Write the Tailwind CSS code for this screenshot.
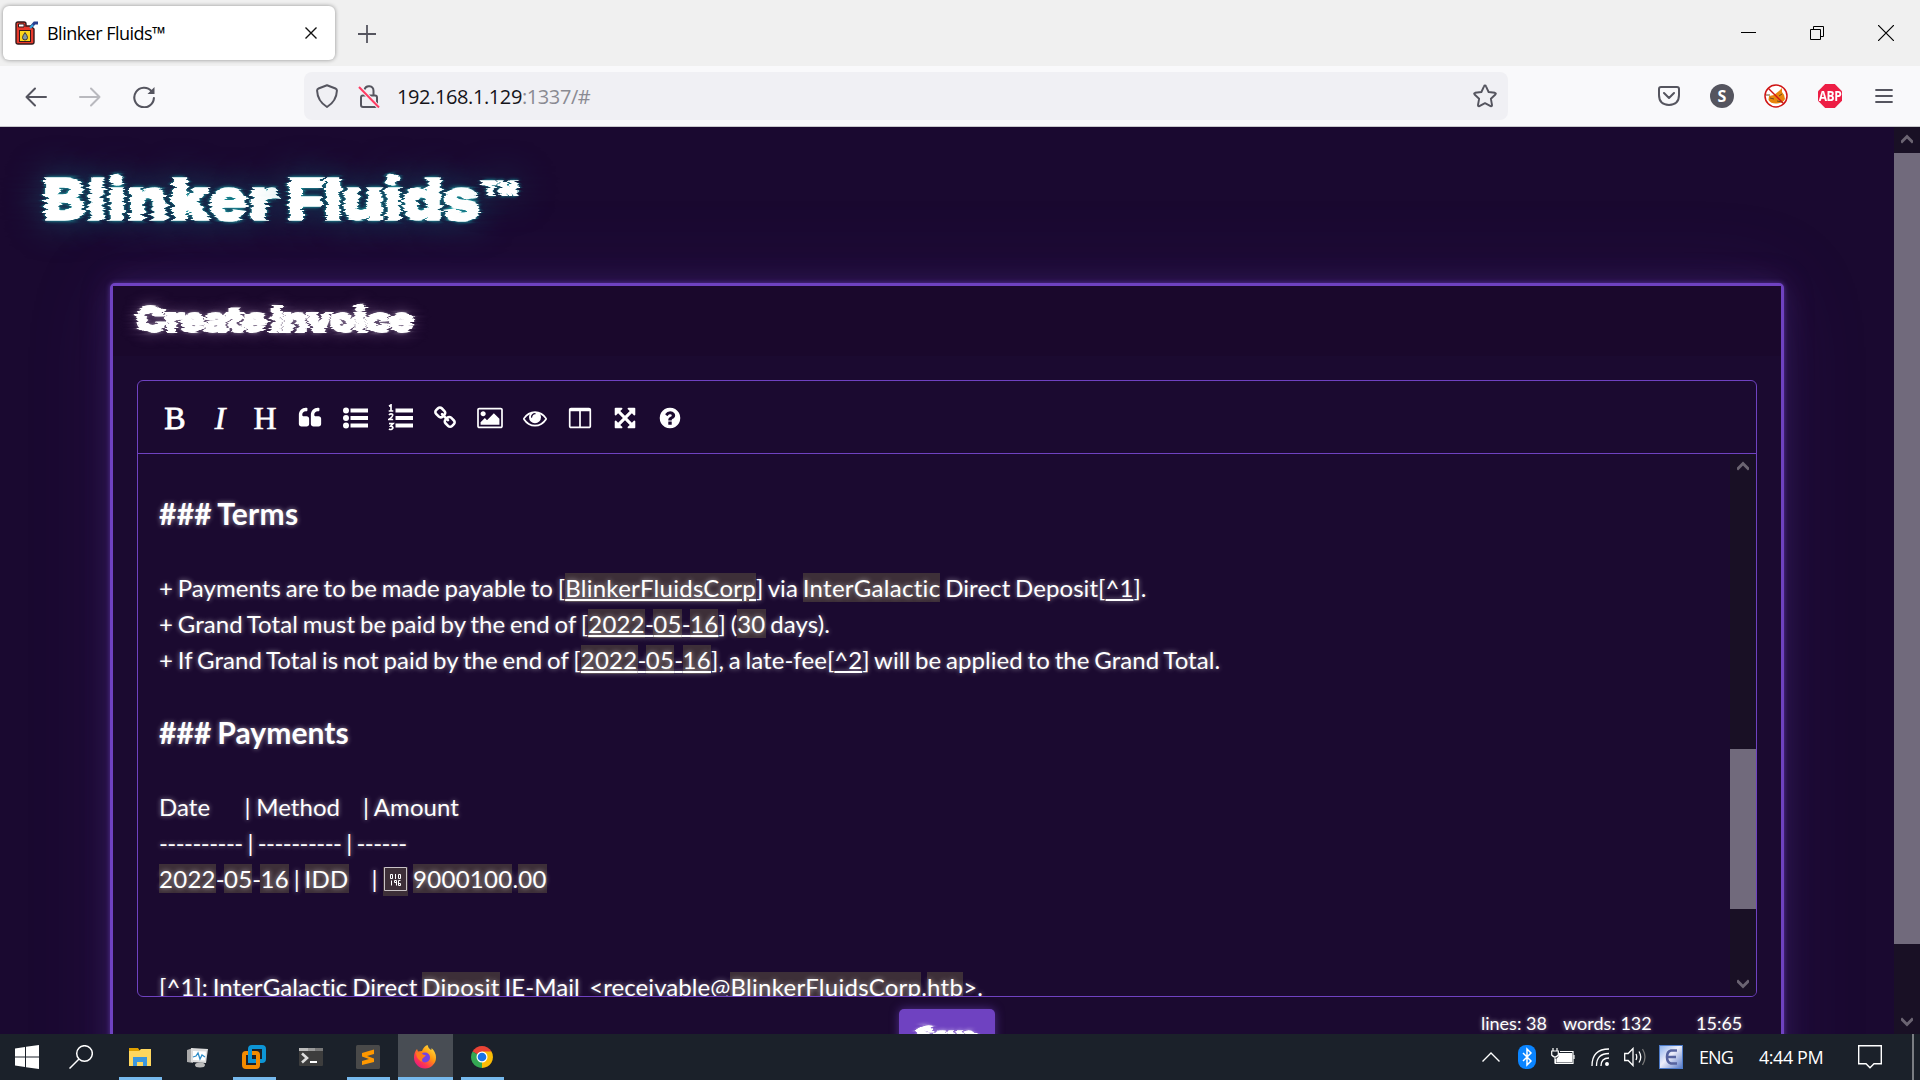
<!DOCTYPE html>
<html lang="en">
<head>
<meta charset="utf-8">
<title>Blinker Fluids™</title>
<script src="https://cdn.jsdelivr.net/npm/@tailwindcss/browser@4"></script>
</head>
<body class="w-[1920px] h-[1080px] overflow-hidden flex flex-col bg-[#1a0930] font-['Open_Sans',sans-serif]">
<svg class="absolute w-0 h-0"><defs>
<filter id="glitch" x="-5%" y="-20%" width="110%" height="140%" color-interpolation-filters="sRGB"><feTurbulence type="fractalNoise" baseFrequency="0.03 0.36" numOctaves="2" seed="7"/><feColorMatrix values="1 0 0 0 0  0 0 0 0 0.5  0 0 0 0 0.5  0 0 0 0 1" result="n"/><feDisplacementMap in="SourceGraphic" in2="n" scale="12" xChannelSelector="R" yChannelSelector="G"/></filter>
</defs></svg>

<!-- tab strip -->
<header class="h-[66px] shrink-0 bg-[#f0f0f0] flex items-center justify-between pl-[3px]">
  <div class="flex items-center">
    <div class="w-[332px] h-[54px] rounded-md bg-white shadow-[0_0_4px_rgba(0,0,0,0.4)] flex items-center pl-3 pr-[18px]">
      <svg class="w-6 h-6" viewBox="0 0 24 24"><path d="M1 3q0-2 2-2h6q2 0 2 2v2h5l3 3v13q0 2-2 2H3q-2 0-2-2z" fill="#e8392b" stroke="#33191b" stroke-width="1.4"/><path d="M3.500 3h5.500v3H3.500z" fill="#fff" stroke="#33191b"/><path d="M16.500 5.500l3-3.500H23" fill="none" stroke="#2b3f8f" stroke-width="3"/><path d="M15 7l3-3" stroke="#37a7dc" stroke-width="2"/><rect x="4.500" y="9.500" width="11" height="11" fill="#fbd51b" stroke="#33191b"/><path d="M10 11.500q2.500 3.500 2.500 5a2.500 2.500 0 0 1-5 0q0-1.500 2.500-5z" fill="#7d98a8" stroke="#23191f" stroke-width=".8"/></svg>
      <span class="ml-2 text-[18px] tracking-[-0.52px] text-black">Blinker Fluids™</span>
      <svg class="ml-auto w-3 h-3" viewBox="0 0 12 12" stroke="#111" stroke-width="1.400"><path d="M.5.5l11 11M11.500.5l-11 11"/></svg>
    </div>
    <svg class="ml-[23px] mt-px w-[18px] h-[18px]" viewBox="0 0 18 18" stroke="#55555f" stroke-width="1.800"><path d="M9 0v18M0 9h18"/></svg>
  </div>
  <div class="flex items-center pr-[26px] gap-[54px] text-black">
    <svg class="w-[15px] h-4" viewBox="0 0 15 16"><path d="M0 7.500h15" stroke="#000"/></svg>
    <svg class="w-[14px] h-[14px]" viewBox="0 0 14 14" fill="none" stroke="#000"><path d="M.5 3.500h10v10H.5zM3.500 3.500v-3h10v10h-3"/></svg>
    <svg class="w-4 h-4" viewBox="0 0 16 16" stroke="#000" stroke-width="1.200"><path d="M0 0l16 16M16 0L0 16"/></svg>
  </div>
</header>

<!-- navigation bar -->
<nav class="h-[61px] shrink-0 bg-[#f9f9fb] border-b border-[#c8c8cc] flex items-center pl-[25px] pr-[27px]">
  <svg class="mt-[2px] w-[22px] h-[20px]" viewBox="0 0 22 20" fill="none" stroke="#55555f" stroke-width="2" stroke-linecap="round" stroke-linejoin="round"><path d="M21 10H1.500M10 1.500L1.500 10l8.500 8.500"/></svg>
  <svg class="mt-[2px] ml-8 w-[22px] h-[20px]" viewBox="0 0 22 20" fill="none" stroke="#b9b9be" stroke-width="2" stroke-linecap="round" stroke-linejoin="round"><path d="M1 10h19.500M12 1.500l8.500 8.500-8.500 8.500"/></svg>
  <svg class="mt-[2px] ml-8 w-[22px] h-[22px]" viewBox="0 0 22 22" fill="none" stroke="#55555f" stroke-width="2.100" stroke-linecap="round"><path d="M18.600 5.200A9.800 9.800 0 1 0 20.900 12"/><path d="M21.500 1v7h-7z" fill="#55555f" stroke="none"/></svg>
  <div class="ml-[149px] w-[1204px] h-12 rounded-lg bg-[#f0f0f4] flex items-center pl-3 pr-[11px]">
    <svg class="w-[22px] h-6" viewBox="0 0 22 24" fill="none" stroke="#55555f" stroke-width="2" stroke-linejoin="round"><path d="M11 1.200l8.500 3.300q1.500.6 1.400 2.200Q20.500 17 11 23 1.500 17 1.100 6.700 1 5.100 2.500 4.500z"/></svg>
    <svg class="ml-[20px] w-[22px] h-6" viewBox="0 0 22 24" fill="none" stroke="#55555f" stroke-width="2"><rect x="3" y="11.500" width="16" height="11.500" rx="2"/><path d="M6.500 5.500a4.600 4.600 0 0 1 9 1.200V11"/><path d="M1 3l20 20.500" stroke="#f0f0f4" stroke-width="4"/><path d="M1 3l20 20.500" stroke="#ff3b62"/></svg>
    <span class="ml-[17px] mt-[2px] text-[20px] tracking-[-0.4px] text-[#8a8a92] whitespace-nowrap"><span class="text-[#15141a]">192.168.1.129</span>:1337/#</span>
    <svg class="ml-auto w-6 h-6" viewBox="0 0 24 24" fill="none" stroke="#55555f" stroke-width="1.900" stroke-linejoin="round"><path d="M12 1.500q.7 0 1 .8l2.600 5.700 6.300.8q1.600.4.500 1.700l-4.500 4.300 1.100 6.200q.1 1.700-1.400 1.200L12 19.200l-5.600 3q-1.500.5-1.400-1.200l1.100-6.200-4.500-4.300Q.5 9.200 2.100 8.800L8.400 8 11 2.300q.3-.8 1-.8z"/></svg>
  </div>
  <div class="ml-auto flex items-center gap-[30px]">
    <svg class="w-[22px] h-5" viewBox="0 0 22 20" fill="none" stroke="#55555f" stroke-width="2" stroke-linecap="round" stroke-linejoin="round"><path d="M3 1h16q2 0 2 2v6q0 9.500-10 10Q1 18.500 1 9V3q0-2 2-2zM6 7l5 5 5-5"/></svg>
    <span class="w-6 h-6 rounded-full bg-[#55555f] text-white text-[16px] font-bold leading-6 text-center">S</span>
    <svg class="w-6 h-6" viewBox="0 0 24 24"><circle cx="12" cy="12" r="11" fill="#fff"/><path d="M5 12l5-1 5-4 3-3v4q3 3 3 7-2 4-8 4.500Q7 20 4.500 16z" fill="#e8850c"/><path d="M6 14l4 1M15 12l3-2M13 17l5 1M2 11h4" stroke="#6b4a20"/><circle cx="12" cy="12" r="11" fill="none" stroke="#cf1414" stroke-width="1.500"/><path d="M4 4l16 16" stroke="#cf1414" stroke-width="1.500"/></svg>
    <span class="w-6 h-6 flex items-center justify-center bg-[#ed1e45] text-white text-[12px] font-bold tracking-[-0.5px] [clip-path:polygon(30%_0,70%_0,100%_30%,100%_70%,70%_100%,30%_100%,0_70%,0_30%)]"><span class="scale-y-[1.2]">ABP</span></span>
    <svg class="ml-[3px] w-[18px] h-4" viewBox="0 0 18 16" stroke="#55555f" stroke-width="1.800" stroke-linecap="round"><path d="M1 2h16M1 8h16M1 14h16"/></svg>
  </div>
</nav>

<!-- page -->
<div class="flex-1 min-h-0 flex overflow-hidden">
  <main class="w-[1894px] h-full overflow-hidden flex flex-col">
    <h1 class="h-[156px] shrink-0 pl-[43px] pt-[34px] font-['Inter',sans-serif] font-black text-[58px] leading-[76px] text-white whitespace-nowrap [text-shadow:0_0_3px_#1fd0d0,0_0_5px_#1fa8a8,0_0_36px_#1b8f9c90]"><span class="inline-block origin-left scale-x-[1.09] [word-spacing:-4px] [-webkit-text-stroke:1.5px_white] [filter:url(#glitch)]"><span class="tracking-[1.6px]">Blinker</span> Fluids<span class="text-[54px] leading-none">™</span></span></h1>
    <section class="ml-[110px] w-[1674px] h-[900px] shrink-0 border-[3px] border-[#6f42c1] rounded-[5px] bg-[#1b0a30] shadow-[0_0_5px_#6f42c1aa,0_0_30px_#6f42c140,0_0_90px_#6f42c120] flex flex-col">
      <h2 class="h-[70px] shrink-0 pl-[23px] pt-[9px] bg-[#1a082c] font-['Inter',sans-serif] font-black text-[35px] leading-[48px] tracking-[-0.6px] text-white whitespace-nowrap [text-shadow:0_0_4px_#ffffffaa,0_0_14px_#cba6d888]"><span class="inline-block origin-left scale-x-[1.14] [word-spacing:-2px] [-webkit-text-stroke:2px_white] [filter:url(#glitch)]">Create Invoice</span></h2>
      <div class="mt-[24px] ml-6 w-[1620px] h-[617px] shrink-0 border border-[#6f42c1] rounded-md flex flex-col overflow-hidden">
        <div class="h-[73px] shrink-0 border-b border-[#6f42c1] flex items-center pl-[14.5px] pt-[2px] text-white [&>*]:w-[45px] [&>*]:flex [&>*]:justify-center font-['Liberation_Serif',serif] text-[32px] leading-none">
          <span class="[-webkit-text-stroke:0.8px_white]">B</span>
          <span class="italic [-webkit-text-stroke:0.7px_white]">I</span>
          <span class="[-webkit-text-stroke:0.6px_white]">H</span>
          <span><svg class="w-6 h-6" viewBox="0 0 1792 1792" fill="currentColor"><path id="q" d="M832 960v384q0 80-56 136t-136 56h-384q-80 0-136-56t-56-136v-704q0-104 40.500-198.500t109.500-163.500 163.500-109.500 198.500-40.500h64q26 0 45 19t19 45v128q0 26-19 45t-45 19h-64q-106 0-181 75t-75 181v32q0 40 28 68t68 28h224q80 0 136 56t56 136z"/><use href="#q" x="896"/></svg></span>
          <span><svg class="w-[25px] h-6" viewBox="0 0 25 24" fill="currentColor"><circle cx="3" cy="4.500" r="3"/><circle cx="3" cy="12" r="3"/><circle cx="3" cy="19.500" r="3"/><path d="M7.500 2.500H25v4H7.500zM7.500 10H25v4H7.500zM7.500 17.500H25v4H7.500z"/></svg></span>
          <span><svg class="w-[25px] h-[28px]" viewBox="0 0 25 28" fill="currentColor"><path d="M7.500 4.500H25v4H7.500zM7.500 12H25v4H7.500zM7.500 19.500H25v4H7.500z"/><path d="M1 2.200L3 .9v6M.7 7h4.600M.9 11q2-2 3.600-.6 1 1.600-3.600 5.100h4.300M1 19.700h4l-2.300 2.500q2.600.2 2.100 2-1.200 2.200-3.900.7" fill="none" stroke="currentColor" stroke-width="1.700"/></svg></span>
          <span><svg class="w-6 h-6" viewBox="0 0 1792 1792" fill="currentColor"><path d="M1520 1216q0-40-28-68l-208-208q-28-28-68-28-42 0-72 32 3 3 19 18.500t21.500 21.500 15 19 13 25.500 3.500 27.500q0 40-28 68t-68 28q-15 0-27.500-3.500t-25.500-13-19-15-21.500-21.500-18.500-19q-33 31-33 73 0 40 28 68l206 207q27 27 68 27 40 0 68-26l147-146q28-28 28-67zm-703-705q0-40-28-68l-206-207q-28-28-68-28-39 0-68 27l-147 146q-28 28-28 67 0 40 28 68l208 208q27 27 68 27 42 0 72-31-3-3-19-18.500t-21.500-21.500-15-19-13-25.500-3.500-27.500q0-40 28-68t68-28q15 0 27.500 3.500t25.500 13 19 15 21.500 21.500 18.500 19q33-31 33-73zm895 705q0 120-85 203l-147 146q-83 83-203 83-121 0-204-85l-206-207q-83-83-83-203 0-123 88-209l-88-88q-86 88-208 88-120 0-204-84l-208-208q-84-84-84-204t85-203l147-146q83-83 203-83 121 0 204 85l206 207q83 83 83 203 0 123-88 209l88 88q86-88 208-88 120 0 204 84l208 208q84 84 84 204z"/></svg></span>
          <span><svg class="w-[26px] h-6" viewBox="0 0 1920 1792" fill="currentColor"><path d="M640 576q0 80-56 136t-136 56-136-56-56-136 56-136 136-56 136 56 56 136zm1024 384v448h-1408v-192l320-320 160 160 512-512zm96-704h-1600q-13 0-22.500 9.500t-9.500 22.500v1216q0 13 9.500 22.500t22.500 9.500h1600q13 0 22.500-9.500t9.500-22.500v-1216q0-13-9.500-22.500t-22.500-9.500zm160 32v1216q0 66-47 113t-113 47h-1600q-66 0-113-47t-47-113v-1216q0-66 47-113t113-47h1600q66 0 113 47t47 113z"/></svg></span>
          <span><svg class="w-6 h-6" viewBox="0 0 1792 1792" fill="currentColor"><path d="M1664 960q-152-236-381-353 61 104 61 225 0 185-131.500 316.500t-316.500 131.500-316.500-131.500-131.500-316.500q0-121 61-225-229 117-381 353 133 205 333.500 326.500t434.500 121.500 434.500-121.500 333.500-326.500zm-720-384q0-20-14-34t-34-14q-125 0-214.500 89.500t-89.500 214.500q0 20 14 34t34 14 34-14 14-34q0-86 61-147t147-61q20 0 34-14t14-34zm848 384q0 34-20 69-140 230-376.500 368.500t-499.500 138.500-499.500-139-376.500-368q-20-35-20-69t20-69q140-229 376.500-368t499.500-139 499.500 139 376.500 368q20 35 20 69z"/></svg></span>
          <span><svg class="w-6 h-6" viewBox="0 0 1792 1792" fill="currentColor"><path d="M224 1536h608v-1152h-640v1120q0 13 9.500 22.500t22.500 9.500zm1376-32v-1120h-640v1152h608q13 0 22.500-9.500t9.500-22.500zm128-1216v1216q0 66-47 113t-113 47h-1344q-66 0-113-47t-47-113v-1216q0-66 47-113t113-47h1344q66 0 113 47t47 113z"/></svg></span>
          <span><svg class="w-6 h-6" viewBox="0 0 1792 1792" fill="currentColor"><path d="M1411 541l-355 355 355 355 144-144q29-31 70-14 39 17 39 59v448q0 26-19 45t-45 19h-448q-42 0-59-40-17-39 14-69l144-144-355-355-355 355 144 144q31 30 14 69-17 40-59 40h-448q-26 0-45-19t-19-45v-448q0-42 40-59 39-17 69 14l144 144 355-355-355-355-144 144q-19 19-45 19-12 0-24-5-40-17-40-59v-448q0-26 19-45t45-19h448q42 0 59 40 17 39-14 69l-144 144 355 355 355-355-144-144q-31-30-14-69 17-40 59-40h448q26 0 45 19t19 45v448q0 42-39 59-13 5-25 5-26 0-45-19z"/></svg></span>
          <span><svg class="w-6 h-6" viewBox="0 0 1792 1792" fill="currentColor"><path d="M1024 1376v-192q0-14-9-23t-23-9h-192q-14 0-23 9t-9 23v192q0 14 9 23t23 9h192q14 0 23-9t9-23zm256-672q0-88-55.500-163t-138.500-116-170-41q-243 0-371 213-15 24 8 42l132 100q7 6 19 6 16 0 25-12 53-68 86-92 34-24 86-24 48 0 85.500 26t37.500 59q0 38-20 61t-68 45q-63 28-115.500 86.500t-52.500 125.500v36q0 14 9 23t23 9h192q14 0 23-9t9-23q0-19 21.500-49.500t54.500-49.500q32-18 49-28.500t46-35 44.500-48 28-60.500 12.500-81zm384 192q0 209-103 385.500t-279.500 279.500-385.500 103-385.500-103-279.500-279.500-103-385.500 103-385.500 279.500-279.500 385.500-103 385.500 103 279.500 279.500 103 385.500z"/></svg></span>
        </div>
        <div class="flex-1 min-h-0 flex">
          <div class="flex-1 overflow-hidden pl-[21px] pt-[41px] font-['Lato',sans-serif] text-[24px] leading-[36px] tracking-[0.06px] text-white [&>div]:whitespace-pre [word-spacing:-1.4px] [text-shadow:0_0_5px_#ffffff90] [&_u]:underline-offset-2 [&_mark]:bg-[#3d2f38] [&_mark]:text-white [&_mark]:tracking-[0.28px]">
            <div class="h-[39px] leading-[37px] text-[30px] font-bold tracking-[0.25px]">### Terms</div>
            <div class="h-9"></div>
            <div class="h-9">+ Payments are to be made payable to [<u><mark>BlinkerFluidsCorp</mark></u>] via <mark>InterGalactic</mark> Direct Deposit[<u>^1</u>].</div>
            <div class="h-9">+ Grand Total must be paid by the end of [<u class="tracking-[-0.6px]"><mark>2022</mark>-<mark>05</mark>-<mark>16</mark></u>] (<mark>30</mark> days).</div>
            <div class="h-9">+ If Grand Total is not paid by the end of [<u class="tracking-[-0.6px]"><mark>2022</mark>-<mark>05</mark>-<mark>16</mark></u>], a late-fee[<u>^2</u>] will be applied to the Grand Total.</div>
            <div class="h-9"></div>
            <div class="h-[39px] leading-[37px] text-[30px] font-bold">### Payments</div>
            <div class="h-9"></div>
            <div class="h-9 [word-spacing:-0.5px]">Date      | Method    | Amount</div>
            <div class="h-9 tracking-[-0.55px] [word-spacing:-0.8px]">---------- | ---------- | ------</div>
            <div class="h-9"><span class="tracking-[-0.8px]"><mark>2022</mark>-<mark>05</mark>-<mark>16</mark></span> | <mark>IDD</mark><span class="[word-spacing:-0.5px]">    | </span><mark class="inline-flex h-[29px] w-[25px] pl-px align-[-3px]"><svg class="w-[23px] h-6" viewBox="0 0 23 24" fill="none" stroke="#c9c2c6"><path d="M.5.5h22v23H.5z"/><path d="M6.500 7.500h2v4h-2zM11.500 7v5M14.500 7.500h2v4h-2zM7.500 13.500v5M12.500 15.500h-2v-2h2v5M16.500 13.500h-2v5h2v-2h-2" stroke="#fff"/></svg></mark> <mark>9000100</mark>.<mark>00</mark></div>
            <div class="h-[72px]"></div>
            <div class="h-9">[^1]: InterGalactic Direct <mark>Diposit</mark> IE-Mail  &lt;receivable@<mark>BlinkerFluidsCorp</mark>.<mark>htb</mark>&gt;.</div>
          </div>
          <div class="w-[26px] bg-[#191025] flex flex-col items-center">
            <svg class="mt-[7px] w-3 h-[10px] shrink-0" viewBox="0 0 12 10" fill="none" stroke="#6b6472" stroke-width="3"><path d="M0 8.500l6-6 6 6"/></svg>
            <div class="mt-[278px] w-full h-[160px] shrink-0 bg-[#716a7c]"></div>
            <svg class="mt-auto mb-[7px] w-3 h-[10px] shrink-0" viewBox="0 0 12 10" fill="none" stroke="#6b6472" stroke-width="3"><path d="M0 1.500l6 6 6-6"/></svg>
          </div>
        </div>
      </div>
      <div class="flex pl-[786px]">
        <button class="mt-3 w-[96px] h-[57px] shrink-0 rounded-[5px] bg-[#6f42c1] shadow-[0_0_10px_#6f42c199] text-white font-['Inter',sans-serif] font-black text-[24px] leading-[50px] [text-shadow:0_0_5px_white]"><span class="block -mt-1 [-webkit-text-stroke:1.5px_white] [filter:url(#glitch)]">Save</span></button>
        <div class="ml-[486px] mt-[14px] flex h-6 font-['Lato',sans-serif] text-[18px] leading-6 text-white whitespace-nowrap [text-shadow:0_0_4px_#ffffff90]"><span class="w-[82px]">lines: 38</span><span class="w-[133px]">words: 132</span><span>15:65</span></div>
      </div>
    </section>
  </main>
  <aside class="w-[26px] h-full bg-[#191025] flex flex-col items-center">
    <svg class="mt-[7px] w-3 h-[10px] shrink-0" viewBox="0 0 12 10" fill="none" stroke="#6b6472" stroke-width="3"><path d="M0 8.500l6-6 6 6"/></svg>
    <div class="mt-[9px] w-full h-[791px] bg-[#716a7c]"></div>
    <svg class="mt-auto mb-[7px] w-3 h-[10px] shrink-0" viewBox="0 0 12 10" fill="none" stroke="#6b6472" stroke-width="3"><path d="M0 1.500l6 6 6-6"/></svg>
  </aside>
</div>

<!-- taskbar -->
<footer class="h-[46px] shrink-0 bg-[#1b212a] flex items-stretch text-white">
  <div class="w-[54px] flex items-center justify-center"><svg class="w-6 h-6" viewBox="0 0 24 24" fill="#fff"><path d="M0 3.400l10-1.400v9.500H0zM11 1.800L24 0v11.500H11zM0 12.500h10V22L0 20.600zM11 12.500h13V24l-13-1.800z"/></svg></div>
  <div class="w-[58px] flex items-center pl-[15px]"><svg class="w-6 h-6" viewBox="0 0 24 24" fill="none" stroke="#fff" stroke-width="1.500"><circle cx="15.500" cy="8.500" r="7.800"/><path d="M10 14L.5 23.500"/></svg></div>
  <div class="w-[57px] flex flex-col items-center justify-end"><svg class="w-6 h-6 mb-2 mr-px" viewBox="0 0 24 24"><path d="M1 3h9l2 3H1z" fill="#e0a100"/><path d="M1 6h10l2-2h10v17H1z" fill="#ffd75e"/><path d="M5 21v-9h14v9h-4v-4H9v4z" fill="#3d97dd"/></svg><i class="w-[43px] h-[3px] bg-[#76b9ed]"></i></div>
  <div class="w-[57px] flex items-center justify-center"><svg class="w-6 h-6 mr-px" viewBox="0 0 24 24"><path d="M2 5l6-2v15l-6-1z" fill="#aaa"/><path d="M6 3l17 1-2 14-15-1z" fill="#ddd"/><path d="M8 6l13 .500-1 9L8 15z" fill="#fff"/><path d="M8 12l3-1 2-3 2 6 2-4 3 2" fill="none" stroke="#2d8cc8" stroke-width="1.300"/><ellipse cx="15" cy="20" rx="5" ry="2.500" fill="#bbb"/></svg></div>
  <div class="w-[57px] flex flex-col items-center justify-end"><svg class="w-6 h-6 mb-2 mr-px" viewBox="0 0 24 24" fill="none" stroke-width="4"><rect x="8" y="2" width="14" height="14" rx="2" stroke="#0d95d6"/><rect x="2" y="8" width="14" height="14" rx="2" stroke="#f38b00"/><path d="M8 6v10h6" stroke="#0d95d6"/></svg><i class="w-[43px] h-[3px] bg-[#76b9ed]"></i></div>
  <div class="w-[57px] flex items-center justify-center"><svg class="w-6 h-6 mr-px" viewBox="0 0 24 24"><rect y="3" width="24" height="18" rx="1" fill="#3d3d3d"/><path d="M0 3h9v3H0z" fill="#bbb"/><path d="M9 3h7v3H9z" fill="#999"/><path d="M16 3h8v3h-8z" fill="#777"/><path d="M3 8.500l5 4.500-5 4.500" fill="none" stroke="#ddd" stroke-width="2.600"/><path d="M11 16h7v2h-7z" fill="#fff"/></svg></div>
  <div class="w-[57px] flex flex-col items-center justify-end"><svg class="w-6 h-6 mb-2 mr-px" viewBox="0 0 24 24"><rect width="24" height="24" rx="1.500" fill="#494949"/><path d="M6 8l12-3.500V9l-7 2 7 2.500v3.500L6 20v-4l7-2-7-2.500z" fill="#ff9800"/></svg><i class="w-[43px] h-[3px] bg-[#76b9ed]"></i></div>
  <div class="w-[57px] px-px flex flex-col items-center justify-end"><div class="w-[55px] h-[46px] bg-[#484d54] flex flex-col items-center justify-end"><svg class="w-6 h-6 mb-2 mr-px" viewBox="0 0 24 24"><defs><linearGradient id="ff" x1="1" y1="0" x2=".2" y2="1"><stop offset="0" stop-color="#fff44f"/><stop offset=".45" stop-color="#ff980e"/><stop offset=".75" stop-color="#ff3750"/><stop offset="1" stop-color="#e31587"/></linearGradient></defs><path d="M14.500 0q.5 3 3.500 5 1-.5.500-2 4.500 4 4.500 9.500a11 11 0 0 1-22 0Q1 7 4 4l1 2.500L9 6q2-5 5.500-6z" fill="url(#ff)"/><circle cx="12" cy="12.500" r="5" fill="#7542e5"/><path d="M3 8q4-2 7 1.500l3 1-3 2.500q-2 2 0 4-6-1-7-9z" fill="#ff7b1c"/></svg><i class="w-full h-[3px] bg-[#76b9ed]"></i></div></div>
  <div class="w-[57px] flex flex-col items-center justify-end"><svg class="w-6 h-6 mb-2 mr-px" viewBox="0 0 24 24"><path d="M12 12L2.500 6.500A11 11 0 0 1 21.500 6.500z" fill="#ea4335"/><path d="M12 12L2.500 6.500A11 11 0 0 0 12 23z" fill="#34a853"/><path d="M12 12L12 23A11 11 0 0 0 21.500 6.500H12z" fill="#fbbc05"/><circle cx="12" cy="12" r="5.500" fill="#fff"/><circle cx="12" cy="12" r="4.300" fill="#1a73e8"/></svg><i class="w-[43px] h-[3px] bg-[#76b9ed]"></i></div>
  <div class="ml-auto flex items-center whitespace-nowrap text-[18px]">
    <svg class="w-[18px] h-[10px]" viewBox="0 0 18 10" fill="none" stroke="#fff" stroke-width="1.400"><path d="M.5 9.500L9 1l8.500 8.500"/></svg>
    <svg class="ml-[18px] w-[18px] h-6" viewBox="0 0 18 24"><rect width="18" height="24" rx="8" fill="#0a84ff"/><path d="M5 8l8 8-4 4V4l4 4-8 8" fill="none" stroke="#fff" stroke-width="1.500"/></svg>
    <svg class="ml-[15px] w-6 h-5" viewBox="0 0 24 20" fill="none" stroke="#fff" stroke-width="1.200"><path d="M9 4.500h13v12H4.500V12"/><path d="M8 6.500h12.500v8.500H6V12l2-2z" fill="#fff"/><path d="M23 8v4M2 1v3M6 1v3M.7 4h6.600v4q-3.300 4-6.600 0zM4 10v6.500"/></svg>
    <svg class="ml-[16px] w-[18px] h-[18px]" viewBox="0 0 18 18" fill="none" stroke="#fff" stroke-width="1.300"><path d="M1 18Q1 1 18 1M5.500 18Q5.500 5.500 18 5.500M10 18q0-8 8-8" /><circle cx="16" cy="16" r="1.300" fill="#fff"/></svg>
    <svg class="ml-[15px] w-[22px] h-5" viewBox="0 0 22 20" fill="none" stroke="#fff" stroke-width="1.300"><path d="M.7 6.500h3.500L9 1.500v17l-4.800-5H.7zM12 7q1.500 3 0 6M15 4.500q3.500 5.500 0 11"/><path d="M18.500 2q5 8 0 16" stroke="#777"/></svg>
    <svg class="ml-[13px] w-6 h-6" viewBox="0 0 24 24"><defs><linearGradient id="eg" x2="1" y2="1"><stop stop-color="#8db2ee"/><stop offset=".45" stop-color="#eeeefa"/><stop offset="1" stop-color="#5377c6"/></linearGradient></defs><rect x=".5" y=".5" width="23" height="23" fill="url(#eg)" stroke="#4d7bc9"/><path d="M18 5.500h-6q-4 1-4 6.500t4 6.500h6M8 12h9" fill="none" stroke="#56639f" stroke-width="2.600"/></svg>
    <span class="ml-[16px] w-[60px] tracking-[-0.9px]">ENG</span>
    <span class="w-[98px] tracking-[-0.45px]">4:44 PM</span>
    <svg class="w-[26px] h-6" viewBox="0 0 26 24" fill="none" stroke="#fff" stroke-width="1.400"><path d="M1.700.7h22.600v18H17l-4 4-4-4H1.700z"/></svg>
    <i class="ml-[29px] mr-[6px] w-[2px] h-[46px] bg-[#7a7e83]"></i>
  </div>
</footer>
</body>
</html>
